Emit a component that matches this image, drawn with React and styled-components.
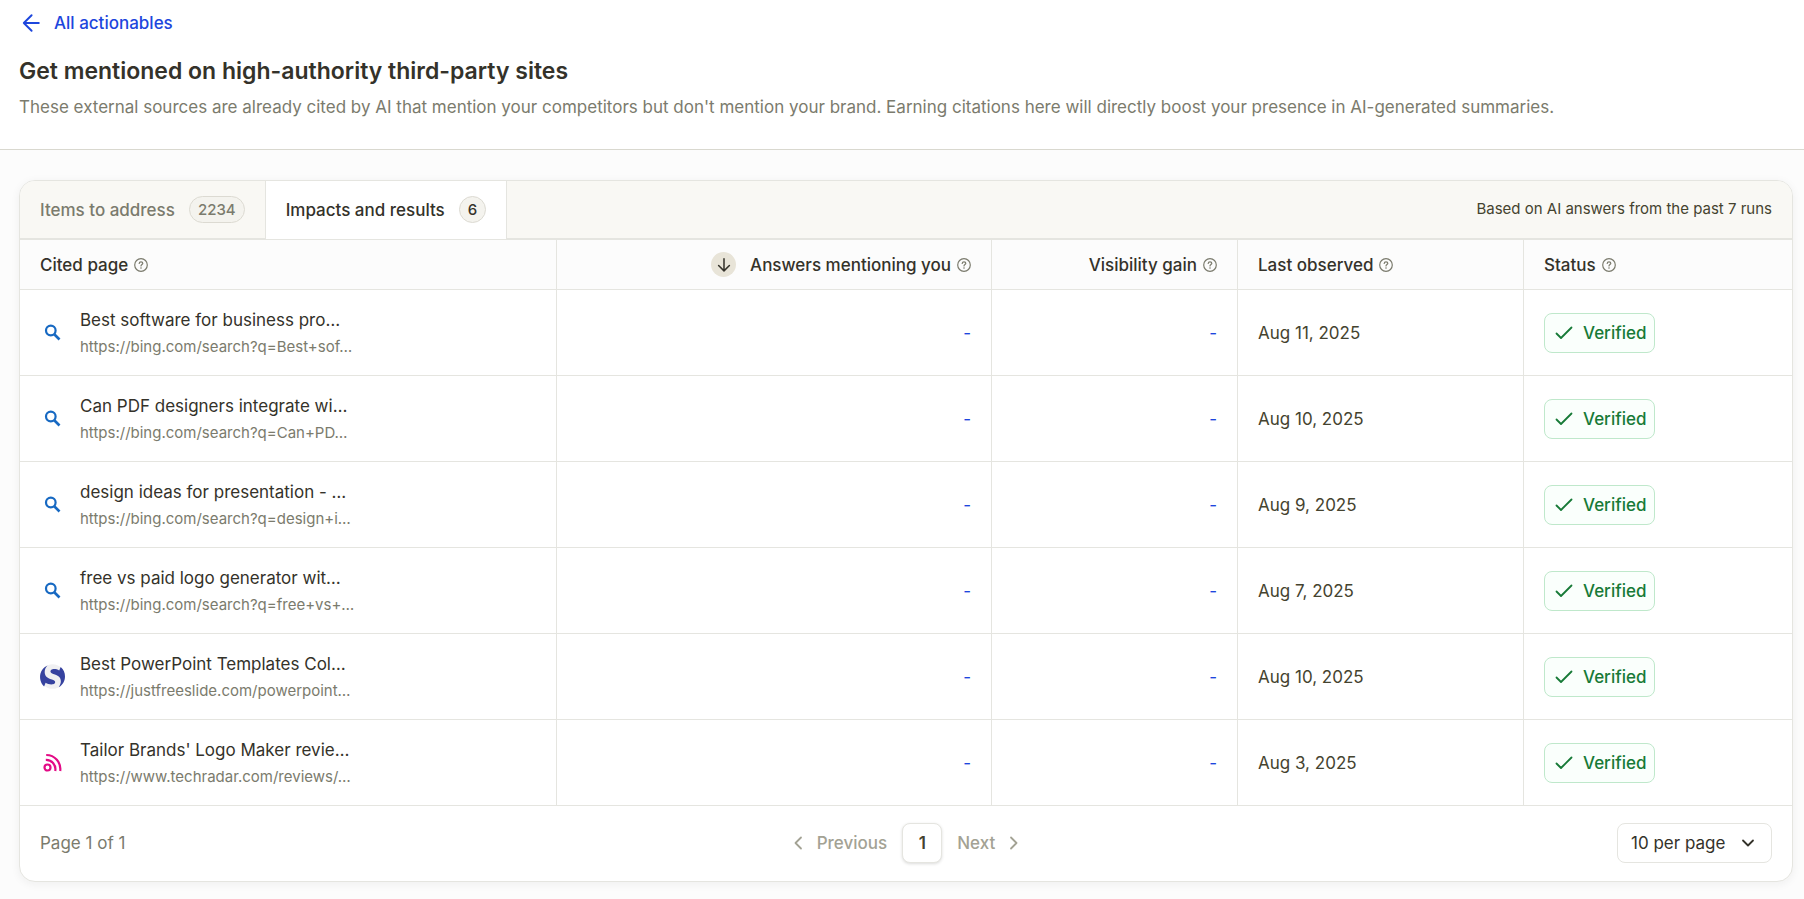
import React from "react";
import styled, { createGlobalStyle, css } from "styled-components";

const color = {
  text: "#34322a",
  body: "#45432f",
  muted: "#7b7b6d",
  faint: "#a3a294",
  line: "#e5e5e0",
  strip: "#f9f8f4",
  page: "#fcfcfc",
  blue: "#1d46dd",
  green: "#177a37",
};

const GlobalStyle = createGlobalStyle`
  *, *::before, *::after { box-sizing: border-box; }
  body {
    margin: 0;
    background: ${color.page};
    color: ${color.text};
    font-family: Inter, "Liberation Sans", sans-serif;
    font-size: 17px;
    line-height: 24px;
  }
  h1, p { margin: 0; }
  button, select { font: inherit; color: inherit; margin: 0; }
  svg { display: block; flex: none; }
`;

const Header = styled.header`
  padding: 11px 20px 30px 19px;
  background: #fff;
  border-bottom: 1px solid #d9d8cf;
`;

const BackLink = styled.a`
  display: flex;
  align-items: center;
  gap: 11px;
  width: fit-content;
  color: ${color.blue};
  font-weight: 500;
  text-decoration: none;
`;

const Title = styled.h1`
  margin-top: 22px;
  font-size: 23px;
  line-height: 28px;
  font-weight: 600;
`;

const Description = styled.p`
  margin-top: 10px;
  color: ${color.muted};
`;

const Main = styled.main`
  padding: 30px 11px 17px 19px;
`;

const Card = styled.section`
  overflow: hidden;
  background: #fff;
  border: 1px solid ${color.line};
  border-radius: 16px;
  box-shadow: 0 2px 10px rgba(40, 40, 30, 0.06);
`;

const Strip = styled.div`
  display: flex;
  align-items: stretch;
  height: 59px;
  background: ${color.strip};
  box-shadow: inset 0 -2px ${color.line};
`;

const Tab = styled.button`
  display: flex;
  align-items: center;
  gap: 14px;
  padding: 0 20px 2px;
  border: 0;
  background: transparent;
  color: ${color.muted};
  font-weight: 500;
  cursor: pointer;
  ${(p) =>
    p.$active &&
    css`
      padding-bottom: 1px;
      color: ${color.text};
      background: #fff;
      border: solid ${color.line};
      border-width: 0 1px 1px;
    `}
`;

const Count = styled.span`
  display: grid;
  place-items: center;
  min-width: 27px;
  height: 27px;
  padding: 0 8px;
  border: 1px solid #dcdad2;
  border-radius: 14px;
  background: #f4f3ee;
  font-size: 15px;
  line-height: 20px;
`;

const StripNote = styled.p`
  align-self: center;
  margin-left: auto;
  padding: 0 20px 4px;
  color: ${color.body};
  font-size: 15px;
  line-height: 20px;
`;

const Table = styled.table`
  width: 100%;
  table-layout: fixed;
  border-collapse: separate;
  border-spacing: 0;
`;

const Col = styled.col`
  width: ${(p) => p.$w}px;
`;

const cell = css`
  padding: 0 20px;
  border-bottom: 1px solid ${color.line};
  text-align: ${(p) => (p.$end ? "right" : "left")};
  &:not(:last-child) { border-right: 1px solid ${color.line}; }
`;

const Th = styled.th`
  ${cell}
  height: 50px;
  background: ${color.page};
  font-weight: 500;
`;

const Td = styled.td`
  ${cell}
  height: 86px;
  color: ${(p) => (p.$end ? color.blue : color.body)};
`;

const HeadLabel = styled.span`
  display: flex;
  align-items: center;
  justify-content: ${(p) => (p.$end ? "flex-end" : "flex-start")};
  gap: 6px;
`;

const IconButton = styled.button`
  display: grid;
  place-items: center;
  padding: 0;
  border: 0;
  background: none;
  color: ${color.muted};
  cursor: pointer;
`;

const SortButton = styled(IconButton)`
  width: 25px;
  height: 25px;
  margin-right: 8px;
  border-radius: 50%;
  background: #e8e4d8;
  color: ${color.text};
`;

const Cited = styled.div`
  display: flex;
  align-items: center;
  gap: 15px;
`;

const PageText = styled.div`
  display: grid;
  gap: 5px;
`;

const PageTitle = styled.span`
  color: ${color.text};
  line-height: 24px;
`;

const PageUrl = styled.span`
  color: ${color.muted};
  font-size: 15px;
  line-height: 20px;
`;

const Verified = styled.span`
  display: flex;
  align-items: center;
  gap: 9px;
  width: fit-content;
  height: 40px;
  padding: 0 8px 0 9px;
  border: 1px solid #bfe8cb;
  border-radius: 8px;
  background: #fafffc;
  color: ${color.green};
  font-weight: 500;
`;

const Footer = styled.footer`
  display: grid;
  grid-template-columns: 1fr auto 1fr;
  align-items: center;
  padding: 17px 20px 18px;
  color: ${color.muted};
`;

const Pager = styled.nav`
  display: flex;
  align-items: center;
  gap: 15px;
`;

const PagerStep = styled.button`
  display: flex;
  align-items: center;
  gap: 8px;
  padding: 0;
  border: 0;
  background: none;
  color: ${color.faint};
  font-weight: 500;
`;

const PageNumber = styled.button`
  width: 40px;
  height: 40px;
  padding: 0;
  border: 1px solid ${color.line};
  border-radius: 8px;
  background: #fff;
  box-shadow: 0 1px 3px rgba(40, 40, 30, 0.16);
  color: ${color.body};
  font-weight: 600;
`;

const SizePicker = styled.label`
  display: grid;
  justify-self: end;
  align-items: center;
  color: ${color.text};
  > * { grid-area: 1 / 1; }
  > svg { justify-self: end; margin-right: 14px; pointer-events: none; }
`;

const SizeSelect = styled.select`
  width: 155px;
  height: 40px;
  padding: 0 40px 0 13px;
  appearance: none;
  border: 1px solid ${color.line};
  border-radius: 8px;
  background: #fff;
`;

function Stroke({ d, size = 20, width = 2 }) {
  return (
    <svg width={size} height={size} viewBox="0 0 20 20" fill="none" stroke="currentColor"
      strokeWidth={width} strokeLinecap="round" strokeLinejoin="round" aria-hidden="true">
      <path d={d} />
    </svg>
  );
}

function Help({ topic }) {
  return (
    <IconButton type="button" aria-label={`About ${topic}`}>
      <svg width="14" height="14" viewBox="0 0 14 14" fill="none" stroke="currentColor" strokeWidth="1.2" strokeLinecap="round">
        <circle cx="7" cy="7" r="6.3" />
        <path d="M5.2 5.5C5.3 4.3 6.1 3.8 7 3.8c1 0 1.8.6 1.8 1.5 0 1.2-1.8 1.3-1.8 2.6" />
        <circle cx="7" cy="10" r=".8" fill="currentColor" stroke="none" />
      </svg>
    </IconButton>
  );
}

function Favicon({ kind }) {
  if (kind === "slide")
    return (
      <svg width="25" height="25" viewBox="0 0 25 25" aria-hidden="true">
        <circle cx="12.5" cy="12.5" r="12.3" fill="#f0f0f2" />
        <path d="M7.500 1.500C1.500 4.200-1.200 10.800.6 16.800c.7 2.500 1.900 4.300 3.500 5.600l1.500-3.600c2.200 1.200 4.800 2 7.400 1.500 2.400-.5 2.900-2.900.8-4-2.300-1.200-5.200-1.400-7.400-3.600C3.700 9.700 4.300 4.500 7.500 1.500Z" fill="#36429f" />
        <path d="M20.700 3.100c2.900 2.300 4.300 5.800 4.300 9.400 0 4.300-2.300 8.600-6.300 10.800 2.800-3.600 3.100-8.500-.3-11-2.200-1.600-4.800-1.900-6.700-3-1.900-1.100-1.500-3.500.8-4 2.200-.5 4.600.1 6.700 1.100Z" fill="#36429f" />
      </svg>
    );
  if (kind === "radar")
    return (
      <svg width="25" height="25" viewBox="0 0 25 25" fill="none" stroke="#e30b86" strokeWidth="2.200" aria-hidden="true">
        <circle cx="7.500" cy="17.500" r="3" />
        <path d="M5.800 9.900a9.300 9.300 0 0 1 9.400 11.200M6.200 5a14.100 14.100 0 0 1 14 16" />
      </svg>
    );
  return (
    <svg width="25" height="25" viewBox="0 0 25 25" fill="none" stroke="#1769c2" aria-hidden="true">
      <circle cx="10.800" cy="10.500" r="4.800" strokeWidth="2.200" />
      <path d="m14.500 14.500 5 5" strokeWidth="2.600" />
    </svg>
  );
}

const columns = [
  { label: "Cited page", w: 537 },
  { label: "Answers mentioning you", w: 435, end: true, sorted: true },
  { label: "Visibility gain", w: 246, end: true },
  { label: "Last observed", w: 286 },
  { label: "Status", w: 268 },
];

const rows = [
  ["search", "Best software for business pro…", "https://bing.com/search?q=Best+sof…", "Aug 11, 2025"],
  ["search", "Can PDF designers integrate wi…", "https://bing.com/search?q=Can+PD…", "Aug 10, 2025"],
  ["search", "design ideas for presentation - …", "https://bing.com/search?q=design+i…", "Aug 9, 2025"],
  ["search", "free vs paid logo generator wit…", "https://bing.com/search?q=free+vs+…", "Aug 7, 2025"],
  ["slide", "Best PowerPoint Templates Col…", "https://justfreeslide.com/powerpoint…", "Aug 10, 2025"],
  ["radar", "Tailor Brands' Logo Maker revie…", "https://www.techradar.com/reviews/…", "Aug 3, 2025"],
];

export default function App() {
  return (
    <>
      <GlobalStyle />
      <Header>
        <BackLink href="#actionables">
          <Stroke d="M16.500 10H4M10.500 3.500 4 10l6.500 6.500" size={24} width={1.600} />
          All actionables
        </BackLink>
        <Title>Get mentioned on high-authority third-party sites</Title>
        <Description>
          These external sources are already cited by AI that mention your competitors but don't
          mention your brand. Earning citations here will directly boost your presence in
          AI-generated summaries.
        </Description>
      </Header>
      <Main>
        <Card>
          <Strip role="tablist">
            <Tab type="button" role="tab" aria-selected="false">
              Items to address <Count>2234</Count>
            </Tab>
            <Tab type="button" role="tab" aria-selected="true" $active>
              Impacts and results <Count>6</Count>
            </Tab>
            <StripNote>Based on AI answers from the past 7 runs</StripNote>
          </Strip>
          <Table>
            <colgroup>
              {columns.map((c) => <Col key={c.label} $w={c.w} />)}
            </colgroup>
            <thead>
              <tr>
                {columns.map((c) => (
                  <Th key={c.label} scope="col" $end={c.end} aria-sort={c.sorted ? "descending" : undefined}>
                    <HeadLabel $end={c.end}>
                      {c.sorted && (
                        <SortButton type="button" aria-label="Sort by answers mentioning you">
                          <Stroke d="M10 3v13.500M4 10.500l6 6 6-6" size={18} width={1.700} />
                        </SortButton>
                      )}
                      {c.label}
                      <Help topic={c.label} />
                    </HeadLabel>
                  </Th>
                ))}
              </tr>
            </thead>
            <tbody>
              {rows.map(([kind, title, url, date]) => (
                <tr key={title}>
                  <Td>
                    <Cited>
                      <Favicon kind={kind} />
                      <PageText>
                        <PageTitle>{title}</PageTitle>
                        <PageUrl>{url}</PageUrl>
                      </PageText>
                    </Cited>
                  </Td>
                  <Td $end>-</Td>
                  <Td $end>-</Td>
                  <Td>{date}</Td>
                  <Td>
                    <Verified>
                      <Stroke d="M2.500 10.500 7 15 17.500 4.500" width={1.800} />
                      Verified
                    </Verified>
                  </Td>
                </tr>
              ))}
            </tbody>
          </Table>
          <Footer>
            <span>Page 1 of 1</span>
            <Pager aria-label="Pagination">
              <PagerStep type="button">
                <Stroke d="M12 4.500 6.500 10l5.500 5.500" width={1.800} />
                Previous
              </PagerStep>
              <PageNumber type="button" aria-current="page">1</PageNumber>
              <PagerStep type="button">
                Next
                <Stroke d="M8 4.500l5.500 5.500L8 15.500" width={1.800} />
              </PagerStep>
            </Pager>
            <SizePicker>
              <SizeSelect aria-label="Rows per page" defaultValue="10">
                <option value="10">10 per page</option>
                <option value="25">25 per page</option>
              </SizeSelect>
              <Stroke d="m5 7.500 5 5 5-5" width={1.800} />
            </SizePicker>
          </Footer>
        </Card>
      </Main>
    </>
  );
}
